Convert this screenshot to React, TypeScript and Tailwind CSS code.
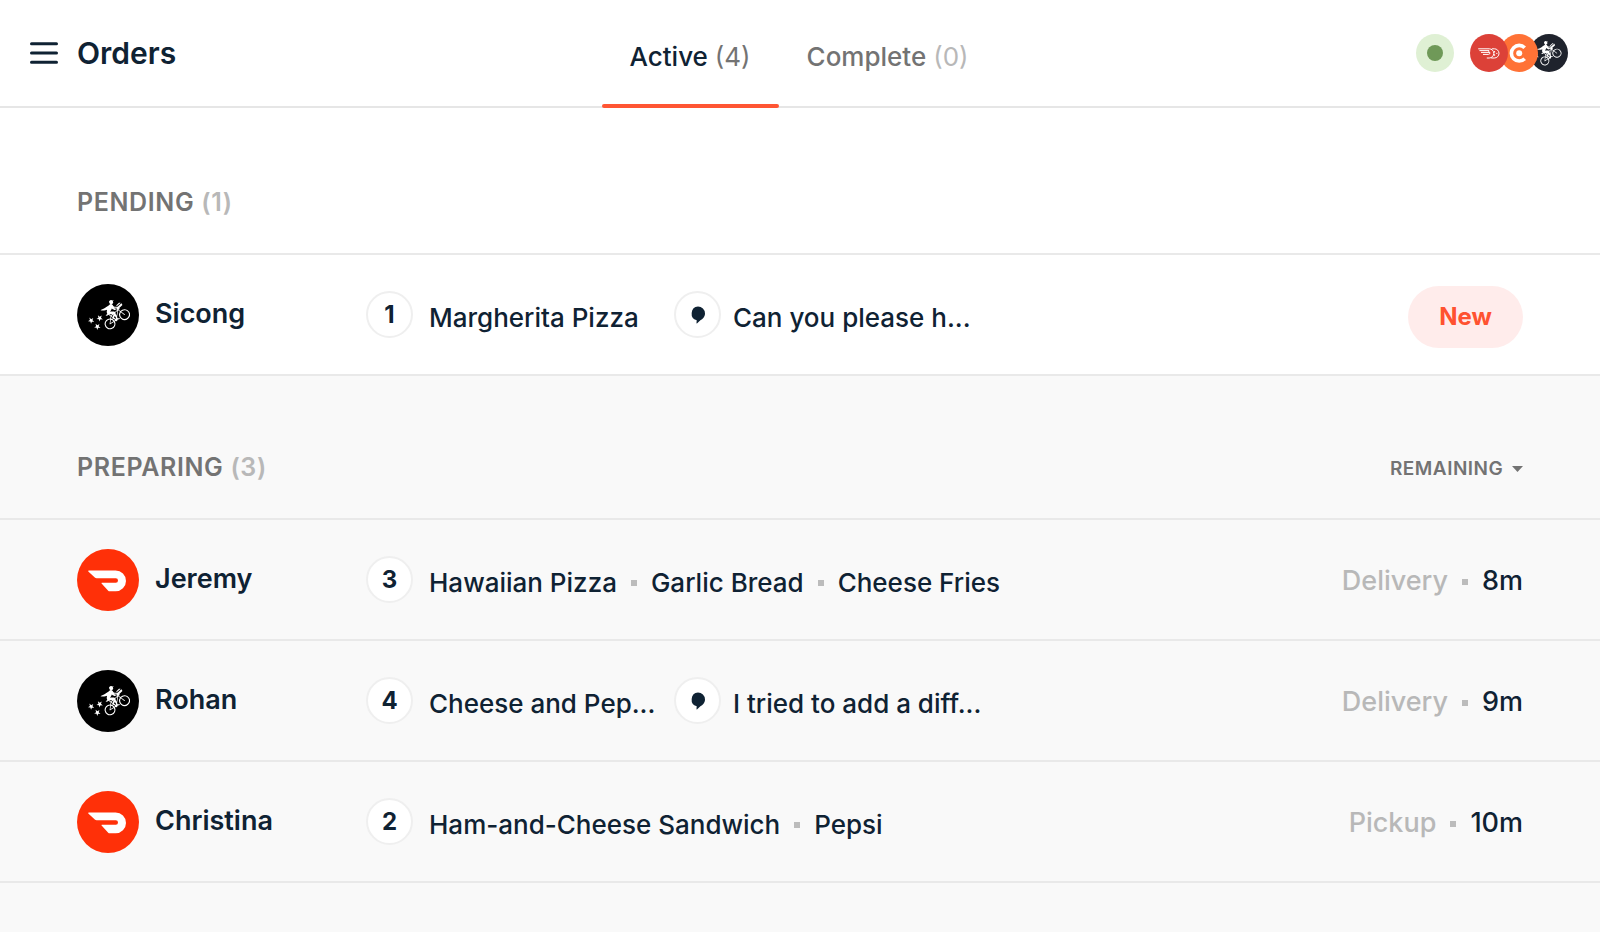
import { useState } from 'react';
import { SiPostmates } from 'react-icons/si';

type Service = 'doordash' | 'postmates';

type Order = {
  name: string;
  service: Service;
  count: number;
  items: string[];
  note?: string;
  type?: string;
  remaining?: string;
};

const pending: Order[] = [
  {
    name: 'Sicong',
    service: 'postmates',
    count: 1,
    items: ['Margherita Pizza'],
    note: 'Can you please h...'
  }
];

const preparing: Order[] = [
  {
    name: 'Jeremy',
    service: 'doordash',
    count: 3,
    items: ['Hawaiian Pizza', 'Garlic Bread', 'Cheese Fries'],
    type: 'Delivery',
    remaining: '8m'
  },
  {
    name: 'Rohan',
    service: 'postmates',
    count: 4,
    items: ['Cheese and Pep...'],
    note: 'I tried to add a diff...',
    type: 'Delivery',
    remaining: '9m'
  },
  {
    name: 'Christina',
    service: 'doordash',
    count: 2,
    items: ['Ham-and-Cheese Sandwich', 'Pepsi'],
    type: 'Pickup',
    remaining: '10m'
  }
];

const tabs = [
  { id: 'active', label: 'Active', count: 4 },
  { id: 'complete', label: 'Complete', count: 0 }
];

function Dot() {
  return <span aria-hidden="true" className="size-1.5 shrink-0 bg-[#bcbcbc]" />;
}

function ServiceLogo({ service }: { service: Service }) {
  if (service === 'postmates') {
    return (
      <span className="flex size-[62px] shrink-0 items-center justify-center rounded-full bg-black pl-0.5 text-white">
        <SiPostmates className="size-[42px]" />
      </span>
    );
  }
  return (
    <svg viewBox="0 0 62 62" className="size-[62px] shrink-0">
      <circle cx="31" cy="31" r="31" fill="#ff3008" />
      <path
        d="M12 21.5H38.6A10.4 10.4 0 0 1 38.6 42.3H32.6Q31.8 42.3 31.2 41.7L24.6 34.6Q23.9 33.7 25 33.7H38.8A2.2 2.2 0 0 0 38.8 29.3H19.6Q18.5 29.3 17.8 28.5L11.3 22.5Q10.7 21.5 12 21.5Z"
        fill="#fff"
      />
    </svg>
  );
}

function ConnectedServices() {
  return (
    <div className="flex items-center">
      <svg viewBox="0 0 38 38" className="relative z-20 size-[38px]">
        <circle cx="19" cy="19" r="19" fill="#dc4138" />
        <g fill="none" stroke="#fff" strokeWidth="1" strokeLinecap="round" strokeLinejoin="round">
          <path d="M8.6 14.8H19.2A4.6 4.6 0 0 1 19.2 24H17.2" />
          <path d="M9.8 16.6H18.8M11.4 18.4H18.8" />
          <path d="M13.4 20.4H18.4A1.4 1.4 0 0 0 18.6 17.6" />
          <path d="M22.2 14.8H24.4A4.6 4.6 0 0 1 24.4 24H21.6" />
          <path d="M24.6 17.4V18.2M24.6 20.6V21.4M26.6 19.4H27" />
        </g>
      </svg>
      <svg viewBox="0 0 38 38" className="relative z-10 -ml-2 size-[38px]">
        <circle cx="19" cy="19" r="19" fill="#ff7236" />
        <path d="M24.7 13.7A7.8 7.8 0 1 0 24.7 24.7" fill="none" stroke="#fff" strokeWidth="3.6" />
        <circle cx="19.2" cy="19.2" r="3" fill="#fff" />
      </svg>
      <span className="-ml-2 flex size-[38px] items-center justify-center rounded-full bg-[#1f232d] text-white">
        {/* cropped to the rider, without the stars */}
        <SiPostmates viewBox="7.6 3.4 16.4 17.2" className="size-[25px]" />
      </span>
    </div>
  );
}

function SectionTitle({ label, count }: { label: string; count: number }) {
  return (
    <h2 className="text-[25px] leading-8 font-semibold tracking-wide text-[#737373] uppercase">
      {label} <span className="text-[#b8b8b8]">({count})</span>
    </h2>
  );
}

function OrderRow({ order }: { order: Order }) {
  return (
    <li className="flex h-[121px] items-center border-b-2 border-[#e9e9e9] px-[77px]">
      <div className="flex w-[289px] shrink-0 items-center gap-4">
        <ServiceLogo service={order.service} />
        <span className="text-[27px] font-semibold">{order.name}</span>
      </div>

      <span className="flex size-[47px] shrink-0 items-center justify-center rounded-full border-2 border-[#efefef] bg-white text-2xl font-bold">
        {order.count}
      </span>

      <div className="ml-4 flex min-w-0 flex-1 items-center gap-4">
        <div className={`flex items-center gap-3.5 pt-1.5 text-[26px] font-medium whitespace-nowrap ${order.note ? 'w-[229px]' : ''}`}>
          {order.items.map((item, i) => (
            <div key={item} className="flex items-center gap-3.5">
              {i > 0 && <Dot />}
              <span>{item}</span>
            </div>
          ))}
        </div>
        {order.note && (
          <div className="flex items-center gap-3">
            <span className="flex size-[47px] shrink-0 items-center justify-center rounded-full border-2 border-[#efefef] bg-white">
              <svg viewBox="0 0 16 18" className="h-[18px] w-4" fill="currentColor">
                <path d="M8 .6A7 7 0 0 1 15 7.5C15 11 12.6 13 10.4 14.2L7.2 17.2Q6.4 17.7 6.5 16.8L6.7 14.3A7 7 0 0 1 8 .6Z" />
              </svg>
            </span>
            <p className="pt-1.5 text-[26px] font-medium whitespace-nowrap">{order.note}</p>
          </div>
        )}
      </div>

      <div className="flex items-center gap-3.5 pt-1 text-[27px] font-medium">
        {order.remaining ? (
          <>
            <span className="text-[#b8b8b8]">{order.type}</span>
            <Dot />
            <span>{order.remaining}</span>
          </>
        ) : (
          <button className="h-[62px] rounded-full bg-[#ffeceb] px-[31px] text-2xl font-bold text-[#ff5230]">New</button>
        )}
      </div>
    </li>
  );
}

export default function App() {
  const [tab, setTab] = useState('active');

  return (
    <div className="flex min-h-screen flex-col bg-white font-['Inter',sans-serif] text-[#0f2233]">
      <header className="flex h-[108px] border-b-2 border-[#e6e6e6] pr-8 pl-[30px]">
        <div className="flex flex-1 items-center gap-[19px]">
          <button aria-label="Menu">
            <svg viewBox="0 0 28 22" className="h-[22px] w-7" stroke="currentColor" strokeWidth="3" strokeLinecap="round">
              <path d="M1.5 1.7H26.5M1.5 11H26.5M1.5 20.3H26.5" />
            </svg>
          </button>
          <h1 className="text-[30px] font-semibold">Orders</h1>
        </div>

        <nav className="-mb-0.5 flex">
          {tabs.map((t) => (
            <button
              key={t.id}
              onClick={() => setTab(t.id)}
              className={`relative px-7 pt-1 text-[26px] font-medium ${tab === t.id ? '' : 'text-[#737373]'}`}
            >
              {t.label}{' '}
              <span className={`font-normal ${tab === t.id ? 'text-[#737373]' : 'text-[#b8b8b8]'}`}>({t.count})</span>
              {tab === t.id && <span className="absolute inset-x-0 bottom-0 h-1 rounded-full bg-[#ff5533]" />}
            </button>
          ))}
        </nav>

        <div className="flex flex-1 items-center justify-end gap-4">
          <span className="flex size-[38px] items-center justify-center rounded-full bg-[#dff0d4]">
            <span className="size-4 rounded-full bg-[#6f9958]" />
          </span>
          <ConnectedServices />
        </div>
      </header>

      <main className="flex flex-1 flex-col">
        <section>
          <div className="flex items-end border-b-2 border-[#e9e9e9] px-[77px] pt-[78px] pb-[35px]">
            <SectionTitle label="Pending" count={pending.length} />
          </div>
          <ul>
            {pending.map((order) => (
              <OrderRow key={order.name} order={order} />
            ))}
          </ul>
        </section>

        <section className="flex-1 bg-[#f9f9f9]">
          <div className="flex items-center justify-between border-b-2 border-[#e9e9e9] px-[77px] pt-[75px] pb-[35px]">
            <SectionTitle label="Preparing" count={preparing.length} />
            <div className="flex items-center gap-2 pt-1 text-[#737373]">
              <select aria-label="Sort by" className="appearance-none text-[19px] leading-7 font-semibold tracking-wide uppercase">
                <option>Remaining</option>
              </select>
              <svg viewBox="0 0 11 6" className="h-1.5 w-[11px]" fill="currentColor">
                <path d="M0 0H11L5.5 6Z" />
              </svg>
            </div>
          </div>
          <ul>
            {preparing.map((order) => (
              <OrderRow key={order.name} order={order} />
            ))}
          </ul>
        </section>
      </main>
    </div>
  );
}
